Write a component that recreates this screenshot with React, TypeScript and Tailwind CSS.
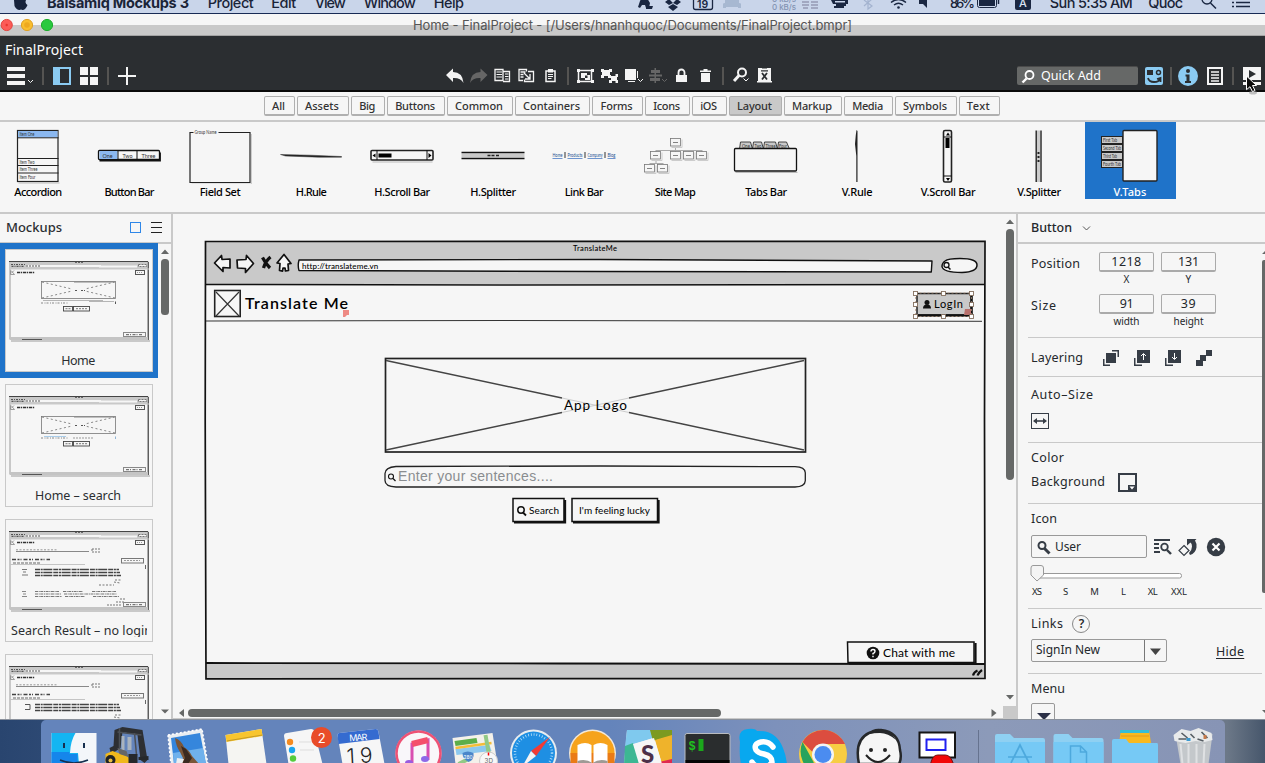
import { useLayoutEffect, useRef, type ReactNode } from "react";

/* Single line of text whose tracking is adjusted so that it spans `w` pixels. */
function Fit({ w, className = "", children }: { w: number; className?: string; children: string }) {
  const ref = useRef<HTMLSpanElement>(null);
  useLayoutEffect(() => {
    const el = ref.current;
    if (!el) return;
    el.style.letterSpacing = "0px";
    const natural = el.getBoundingClientRect().width;
    el.style.letterSpacing = `${(w - natural) / Math.max(1, children.length - 1)}px`;
  }, [w, children]);
  return (
    <span ref={ref} className={`inline-block shrink-0 whitespace-pre ${className}`}>
      {children}
    </span>
  );
}

/* Drawing whose user units start at x, y. */
function Art({ x = 0, y = 0, w, h, className = "", children }: { x?: number; y?: number; w: number; h: number; className?: string; children: ReactNode }) {
  return (
    <svg width={w} height={h} viewBox={`${x} ${y} ${w} ${h}`} className={`block shrink-0 ${className}`} fill="none">
      {children}
    </svg>
  );
}

const ui = "font-['Noto_Sans','Open_Sans',sans-serif]";
const mac = "font-['Inter','Liberation_Sans',sans-serif]";
const hand = "font-['Lato','Open_Sans',sans-serif]";

function MenuBar() {
  return (
    <div className={`relative flex h-[14px] shrink-0 items-start overflow-hidden border-b border-[#172a55] bg-[#c9d5ea] text-[14.5px] font-medium leading-[14px] text-[#1a2438] ${mac}`}>
      <Art x={0} w={47} h={13}>
        <path d="M14 0h12q-1.500 3 1.500 5q-2 5-5 5q-1.500-1-3 0q-3 0-5-4z" fill="#17233c" />
      </Art>
      <div className="-mt-[4px] flex">
        <Fit w={142} className="font-bold">Balsamiq Mockups 3</Fit>
        <Fit w={46} className="ml-[19px]">Project</Fit>
        <Fit w={25} className="ml-[18px]">Edit</Fit>
        <Fit w={31} className="ml-[19px]">View</Fit>
        <Fit w={52} className="ml-[19px]">Window</Fit>
        <Fit w={30} className="ml-[19px]">Help</Fit>
      </div>
      <div className="absolute inset-y-0 left-[630px] flex">
        <Art x={630} w={320} h={13}>
          <path d="M640 1q2-4 7-3l3 5-1 5h-3l-1-3h-3l-2 3-2-1z M646 6h7l-1 3h-6z" fill="#1a2742" />
          <path d="M665 2l4-3 4 4-4 2zM673 3l4-4 4 3-4 3zM668 7l5-3 5 3-5 4z" fill="#1a2742" />
          <rect x="693.500" y="-4" width="19" height="13.500" rx="2" stroke="#1a2742" strokeWidth="1.300" />
          <text x="697" y="7.500" fontSize="10.500" fontWeight="600" fill="#1a2742" fontFamily="Inter">19</text>
          <path d="M723 4q0-1 2-1v-3h14v3q2 0 2 1v4h-3v-1h-12v1h-3z" fill="#9fb0cb" opacity=".8" />
          <text x="772" y="9.500" fontSize="8" fill="#8293b2" fontFamily="Inter" textLength="24">0 kB/s</text>
          <text x="772" y="1.500" fontSize="8" fill="#8293b2" fontFamily="Inter" textLength="24">0 kB/s</text>
          <path d="M802 2h7M802 5h7M803 8h5M811 2h7M811 5h7M811 8h7" stroke="#9599b4" strokeWidth="1.500" />
          <path d="M831 0h17v4h-15zM836 4h10v2h-10zM834 6h10v2h-10z" fill="#1a2742" /><path d="M835 1h10v1.500h-10z" fill="#c9d5ea" />
          <path d="M864 0l8 6-4 3v-10M864 6l8-7" stroke="#a3b3cf" strokeWidth="1.200" />
          <path d="M891 2.500q7.500-6 15 0M894 5q4.500-3.500 9 0" stroke="#1a2742" strokeWidth="1.400" />
          <circle cx="898.500" cy="7.500" r="1.300" fill="#1a2742" />
          <path d="M919 0h3l5-4v12l-4-4h-4z" fill="#1a2742" />
        </Art>
        <Fit w={25} className="-mt-[4px] text-[13px]">86%</Fit>
        <Art x={975} w={77} h={13}>
          <rect x="979.500" y="-4" width="19" height="11.500" rx="2" stroke="#1a2742" />
          <rect x="981" y="-3" width="16" height="9" fill="#1a2742" />
          <path d="M1000.500 0v4" stroke="#1a2742" strokeWidth="1.500" />
          <rect x="1017" y="-5" width="16" height="15" rx="2" fill="#1a2742" />
          <text x="1021" y="7" fontSize="11" fill="#d9e3f2" fontFamily="Inter">A</text>
        </Art>
        <Fit w={83} className="-mt-[4px]">Sun 5:35 AM</Fit>
        <Fit w={35} className="-mt-[4px] ml-[16px]">Quoc</Fit>
        <Art x={1183} w={82} h={13}>
          <circle cx="1207" cy="-1" r="5" stroke="#1a2742" strokeWidth="1.300" />
          <path d="M1210.500 3l5.500 5.500" stroke="#1a2742" strokeWidth="1.500" />
          <path d="M1232 2.500h2M1236 2.500h14M1232 6.500h2M1236 6.500h14" stroke="#1a2742" strokeWidth="1.500" />
        </Art>
      </div>
    </div>
  );
}

function TitleBar() {
  return (
    <div className="flex h-[22px] shrink-0 items-center border-b border-[#a3a3a3] bg-[linear-gradient(#f6f6f6_52%,#c9c9c9_52%)]">
      <Art x={0} y={14} w={413} h={21}>
        <circle cx="6.700" cy="25" r="5.600" fill="#fc5b57" stroke="#e2463f" />
        <circle cx="27" cy="25" r="5.600" fill="#f9be2e" stroke="#dfa023" />
        <circle cx="47" cy="25" r="5.600" fill="#29c93f" stroke="#1dac2b" />
        <circle cx="27" cy="25" r="2.800" fill="#eea91f" />
        <circle cx="6.700" cy="25" r="1.200" fill="#e8352d" />
      </Art>
      <Fit w={439} className={`pt-[2px] text-[13px] text-[#555] ${mac}`}>Home - FinalProject - [/Users/hnanhquoc/Documents/FinalProject.bmpr]</Fit>
    </div>
  );
}

const W = "#f4f4f4";

function ToolIcon({ children }: { children: ReactNode }) {
  return <Art w={24} h={28}>{children}</Art>;
}

function Sep({ w }: { w: number }) {
  return (
    <div className="flex h-[28px] shrink-0 items-center justify-center" style={{ width: w }}>
      <div className="h-[18px] w-[2px] bg-[#555452]" />
    </div>
  );
}

function Toolbar() {
  return (
    <div className="relative flex h-[56px] shrink-0 flex-col border-b-2 border-[#0a0a0a] bg-[#2b2e31]">
      <div className="flex h-[26px] items-center pl-[5px] pt-[1px]">
        <Fit w={78} className={`text-[14px] leading-[20px] text-white ${ui}`}>FinalProject</Fit>
      </div>
      <div className="flex h-[28px]">
        <div className="flex w-[443px]">
          <Art x={0} y={62} w={140} h={28}>
            <path d="M7 67h18v4H7zM7 74h18v4H7zM7 81h18v4H7z" fill={W} />
            <path d="M28 80l2.500 2.500 2.500-2.500" stroke={W} />
            <path d="M42 67h2v18h-2zM107 67h2v18h-2z" fill="#555452" />
            <path d="M53 67h18v18H53z" fill="#8bcbf2" />
            <path d="M60 69h9v14h-9z" fill="#2b2e31" />
            <path d="M80 67h8v8h-8zM90 67h8v8h-8zM80 77h8v8h-8zM90 77h8v8h-8z" fill={W} />
            <path d="M118 75h18v2h-18zM126 67h2v18h-2z" fill={W} />
          </Art>
        </div>
        <div className="flex w-[574px]">
          <ToolIcon><path d="M3 13L10 6.500v3.500q9.500 0 10.500 11q-3-5.500-10.500-5v4z" fill={W} /></ToolIcon>
          <ToolIcon><path d="M20.500 13l-7-6.500v3.500q-9.500 0-10.500 11q3-5.500 10.500-5v4z" fill="#666" /></ToolIcon>
          <ToolIcon>
            <path d="M4 7.500h8v11H4zM12 9.500h6.500v10h-6.500" stroke={W} strokeWidth="1.300" />
            <path d="M5.500 10h5.500M5.500 12.500h5.500M5.500 15h5.500M14 12h3.500M14 14.500h3.500M14 17h3.500" stroke={W} />
          </ToolIcon>
          <ToolIcon>
            <path d="M11.500 9.500v-2H4v11h4M13 9.500h5.500v10h-9v-2" stroke={W} strokeWidth="1.300" />
            <path d="M5.500 10h5M5.500 12.500h3M5.500 15h3M9 11l5.500 5.500M15 12v5h-5" stroke={W} strokeWidth="1.300" />
          </ToolIcon>
          <ToolIcon>
            <path d="M7 9h9v10.500h-9z" stroke={W} strokeWidth="1.500" />
            <path d="M9 7h5v3.500h-5z" fill={W} />
            <path d="M9 12.500h5M9 14.500h5M9 16.500h3.500" stroke={W} />
          </ToolIcon>
          <Sep w={10} />
          <ToolIcon>
            <path d="M5.500 8.500h13v11h-13z" stroke={W} strokeWidth="1.500" />
            <path d="M4 7h3v3H4zM18 7h3v3h-3zM4 18h3v3H4zM18 18h3v3h-3z" fill={W} />
            <path d="M8 11h6v2h3v5h-5v-2H8z" fill={W} />
            <path d="M12 13.500h2.500v2.500h-2.500z" fill="#2b2e31" />
          </ToolIcon>
          <ToolIcon>
            <path d="M5 8h8v6H5zM14 14h6v5h-6z" fill={W} />
            <path d="M4 7h3v3H4zM12 7h3v3h-3zM4 13h3v3H4zM11 13h3v3h-3zM18.500 12h2.500v3h-2.500zM18.500 18h2.500v3h-2.500zM12 18h3v3h-3z" fill={W} />
          </ToolIcon>
          <ToolIcon>
            <path d="M4 7h11v11H4z" fill={W} />
            <path d="M7 19.500h7M16.500 9v7" stroke={W} />
            <path d="M17 17l2.500 2.500L22 17" stroke={W} />
          </ToolIcon>
          <ToolIcon>
            <path d="M6 8h9v3H6zM5 16h10v3H5zM9.500 6h1.500v15h-1.500z" fill="#666" />
            <path d="M4 13.500h13" stroke="#666" strokeWidth="2" />
            <path d="M17 17l2.500 2.500L22 17" stroke="#666" />
          </ToolIcon>
          <ToolIcon>
            <path d="M7 13h11v7H7z" fill={W} />
            <path d="M9.500 14v-3.500a3 3 0 0 1 6 0V14" stroke={W} strokeWidth="1.800" />
          </ToolIcon>
          <ToolIcon>
            <path d="M8 11h9v9H8zM7 8.500h11v1.500H7zM10.500 7h4v2h-4z" fill={W} />
          </ToolIcon>
          <Sep w={12} />
          <ToolIcon>
            <circle cx="13" cy="10.500" r="4" stroke={W} strokeWidth="2" />
            <path d="M10 13.500L5 19" stroke={W} strokeWidth="3" />
            <path d="M14.500 16.500l2.500 2.500 2.500-2.500" stroke={W} />
          </ToolIcon>
          <ToolIcon>
            <path d="M5 6h13v13h1v1.500H4V19h1z" fill={W} />
            <path d="M9 11l5 6.500M14 11l-5 6.500" stroke="#2b2e31" strokeWidth="1.800" />
            <path d="M8 8.800h7M9 6h5" stroke="#2b2e31" strokeWidth="1.200" />
          </ToolIcon>
        </div>
        <div className="mt-[4px] flex h-[19px] w-[121px] items-center rounded-[2px] border-t border-[#4a4a4a] bg-[#666867]">
          <Art x={1017} y={66} w={24} h={19}>
            <circle cx="1029.500" cy="74" r="4" stroke="white" strokeWidth="1.800" />
            <path d="M1026.500 77.500l-4 4" stroke="white" strokeWidth="2.400" />
          </Art>
          <Fit w={60} className={`text-[12.500px] leading-[18px] text-white ${ui}`}>Quick Add</Fit>
        </div>
        <Art x={1138} y={62} w={127} h={28}>
          <rect x="1145" y="67" width="18" height="18" rx="2" fill="#8bcbf2" />
          <path d="M1147 70h6v5h-6z" fill="#2b2e31" />
          <circle cx="1158.500" cy="72.500" r="2" stroke="#2b2e31" strokeWidth="1.500" />
          <path d="M1148 78q1 4 6 4t6-3M1157 79l3.500-1v4" stroke="#2b2e31" strokeWidth="1.800" />
          <path d="M1170 67h2v18h-2zM1232 67h2v18h-2z" fill="#555452" />
          <circle cx="1188" cy="76" r="10" fill="#8bcbf2" />
          <circle cx="1188" cy="71" r="2" fill="#2b2e31" />
          <path d="M1185.500 74.500h4v6.500h1.500v2h-6v-2h1.500v-4.500h-1z" fill="#2b2e31" />
          <rect x="1208" y="68" width="14" height="16" stroke={W} strokeWidth="2" />
          <path d="M1211 72h8M1211 75h8M1211 78h8M1211 81h8" stroke={W} strokeWidth="1.400" />
          <path d="M1243 67h18v13h-18zM1243 82h18v3h-18z" fill={W} />
          <path d="M1249 70l7 4-7 4z" fill="#2b2e31" />
        </Art>
      </div>
      <Art x={1244} y={74} w={18} h={22} className="absolute left-[1244px] top-[38px] z-10">
        <ellipse cx="1253" cy="92.500" rx="4" ry="2" fill="#888" opacity=".5" />
        <path d="M1246.500 76l10 9.500h-4l2.500 5-2.500 1.200-2.500-5-3.500 3z" fill="#0b0b0b" stroke="#fff" />
      </Art>
    </div>
  );
}

function Categories() {
  const tabs: [string, string, number][] = [
    ["All", "w-[31px]", 13], ["Assets", "w-[52px]", 34], ["Big", "w-[34px]", 16], ["Buttons", "w-[58px]", 40],
    ["Common", "w-[66px]", 48], ["Containers", "w-[75px]", 57], ["Forms", "w-[51px]", 32], ["Icons", "w-[45px]", 27],
    ["iOS", "w-[35px]", 17], ["Layout", "w-[53px]", 35], ["Markup", "w-[58px]", 40], ["Media", "w-[49px]", 31],
    ["Symbols", "w-[62px]", 44], ["Text", "w-[41px]", 23],
  ];
  return (
    <div className="flex h-[30px] shrink-0 gap-[2px] border-b-2 border-[#c9c9c9] bg-[#f6f6f6] pl-[264px] pt-[4px]">
      {tabs.map(([name, width, textWidth]) => (
        <div
          key={name}
          className={`flex h-[20px] items-center justify-center rounded-[2px] border border-b-2 border-[#b0b0b0] pr-[2px] text-[11px] font-medium leading-[14px] text-[#333] ${ui} ${width} ${name === "Layout" ? "bg-[#c9c9c9]" : ""}`}
        >
          <Fit w={textWidth}>{name}</Fit>
        </div>
      ))}
    </div>
  );
}

function Tiny({ x, y, w, size = 4.8, children }: { x: number; y: number; w: number; size?: number; children: string }) {
  return (
    <text x={x} y={y} fontFamily="Lato" fontSize={size} fill="#333" textLength={w} lengthAdjust="spacingAndGlyphs">
      {children}
    </text>
  );
}

const library: { name: string; w: number; x?: number; art: ReactNode }[] = [
  { name: "Accordion", w: 48, art: <>
    <rect x="17" y="8.500" width="40.500" height="51" fill="#f6f6f6" stroke="#222" strokeWidth="1.200" />
    <rect x="17.500" y="9" width="39.500" height="6.500" fill="#8bb8f0" />
    <path d="M17 15.800h41M17 36.500h41M17 43.500h41M17 51h41" stroke="#222" />
    <path d="M18 61h41" stroke="#bbb" />
    <Tiny x={19} y={14} w={15}>Item One</Tiny><Tiny x={19} y={41.500} w={15}>Item Two</Tiny>
    <Tiny x={19} y={49} w={18}>Item Three</Tiny><Tiny x={19} y={57} w={16}>Item Four</Tiny>
  </> },
  { name: "Button Bar", w: 50, art: <>
    <rect x="7" y="28.500" width="61" height="9" rx="1" stroke="#111" strokeWidth="1.300" />
    <rect x="8" y="29" width="18" height="8" fill="#8bb8f0" />
    <path d="M26.500 28v10M45.500 28v10" stroke="#111" /><path d="M8 38.500h60.500v-8" stroke="#111" strokeWidth="1.800" />
    <Tiny x={11} y={35.500} w={10} size={6.5}>One</Tiny><Tiny x={31} y={35.500} w={10} size={6.5}>Two</Tiny><Tiny x={50} y={35.500} w={14} size={6.5}>Three</Tiny>
  </> },
  { name: "Field Set", w: 41, art: <>
    <path d="M11 10.500h-3.500v50h60v-50H36" stroke="#222" strokeWidth="1.200" /><path d="M9 62h60V12" stroke="#ccc" />
    <Tiny x={12} y={12} w={22}>Group Name</Tiny>
  </> },
  { name: "H.Rule", w: 31, art: <path d="M7 32.500l30 .7 31 1.300v.7H45L12 34z" fill="#222" stroke="#333" strokeWidth=".5" /> },
  { name: "H.Scroll Bar", w: 56, art: <>
    <rect x="6.500" y="28.500" width="62" height="9.500" rx="1" stroke="#222" strokeWidth="1.600" /><path d="M12.500 28v10M62.500 28v10" stroke="#111" />
    <rect x="14" y="31.500" width="13" height="4" fill="#000" /><path d="M8 33.500l3-2v4zM67 33.500l-3-2.500v5z" fill="#000" /><path d="M8 40h60" stroke="#bbb" />
  </> },
  { name: "H.Splitter", w: 46, art: <>
    <path d="M6 33.500h63" stroke="#c9c9c9" strokeWidth="4" /><path d="M6 30.500h63M6 36.500h63" stroke="#111" strokeWidth="1.700" />
    <path d="M32 33.500h3M36 33.500h3M40.500 33.500h3" stroke="#222" strokeWidth="1.700" />
  </> },
  { name: "Link Bar", w: 39, art: <>
    <g fontFamily="Lato" fontSize="5" fill="#234f91">
      <text x="6" y="35" textLength="10" lengthAdjust="spacingAndGlyphs">Home</text>
      <text x="21" y="35" textLength="15" lengthAdjust="spacingAndGlyphs">Products</text>
      <text x="41" y="35" textLength="15" lengthAdjust="spacingAndGlyphs">Company</text>
      <text x="61" y="35" textLength="8" lengthAdjust="spacingAndGlyphs">Blog</text>
    </g>
    <path d="M6 36.500h10M21 36.500h15M41 36.500h15M61 36.500h8" stroke="#6d94cf" /><path d="M18.500 30v6M38.500 30v6M58.500 30v6" stroke="#333" />
  </> },
  { name: "Site Map", w: 41, art: <>
    <path d="M38 25v3M18.500 28.500h46M18.500 28v2M38 28v2M51.500 28v2M64.500 28v2M18.500 38v4M12 41.500h14" stroke="#aaa" />
    {[[33, 16.5], [13, 29.5], [33, 29.5], [46, 29.5], [59, 29.5], [7, 42.500], [20, 42.500]].map(([a, b]) => (
      <g key={`${a}-${b}`}><path d={`M${a + 1} ${b + 9}h10.500v-8`} stroke="#ccc" /><rect x={a} y={b} width="10" height="7.500" fill="#f6f6f6" stroke="#777" strokeWidth=".8" /><path d={`M${a + 2.5} ${b + 4}h5`} stroke="#666" strokeWidth=".8" /></g>
    ))}
  </> },
  { name: "Tabs Bar", w: 42, art: <>
    <path d="M11 27l1-7h10l2 7 1-7h8l2 7 1-7h11l2 7 1-7h8l3 7z" fill="#c9c9c9" stroke="#333" strokeWidth=".9" />
    <rect x="6" y="26.500" width="62" height="22.500" rx="1" stroke="#111" strokeWidth="1.300" fill="#f6f6f6" /><path d="M7 50.500h62" stroke="#bbb" />
    <Tiny x={13.5} y={25.5} w={8}>One</Tiny><Tiny x={26} y={25.5} w={7}>Two</Tiny><Tiny x={37} y={25.5} w={10}>Three</Tiny><Tiny x={50.5} y={25.5} w={8}>Four</Tiny>
  </> },
  { name: "V.Rule", w: 31, art: <path d="M37 8l1 1v51h-1.200V34l-1.300-12 .8-9z" fill="#222" /> },
  { name: "V.Scroll Bar", w: 55, art: <>
    <rect x="33" y="8.500" width="8" height="51.500" rx="1.500" stroke="#222" strokeWidth="1.600" /><path d="M33 15h8M33 54h8" stroke="#111" />
    <rect x="35" y="16" width="4" height="10" fill="#000" /><path d="M35.500 13.500h4l-2-3zM35.500 56h4l-2 3z" fill="#000" />
  </> },
  { name: "V.Splitter", w: 44, art: <>
    <path d="M37 8.500v51.500" stroke="#ccc" strokeWidth="3" /><path d="M34.700 8.500v51.500M39.500 8.500v51.500" stroke="#222" strokeWidth="1.400" />
    <path d="M37 30v2M37 34v2M37 38v2" stroke="#222" strokeWidth="2" />
  </> },
  { name: "V.Tabs", w: 33, x: 8, art: <>
    <rect x="38" y="8.500" width="34" height="50.500" rx="1" fill="#f6f6f6" stroke="#222" strokeWidth="1.400" />
    {["First Tab", "Second Tab", "Third Tab", "Fourth Tab"].map((t, i) => (
      <g key={t}><rect x="16.500" y={14.5 + i * 8} width="21" height="7" fill="#c9c9c9" stroke="#222" /><Tiny x={18} y={19.8 + i * 8} w={i % 2 ? 18 : 14}>{t}</Tiny></g>
    ))}
  </> },
];

function Library() {
  return (
    <div className="flex h-[92px] shrink-0 items-start overflow-hidden border-b-2 border-[#c9c9c9] bg-[#f6f6f6]">
      <div className="-ml-[7px] flex">
        {library.map((item) => (
          <div key={item.name} className={`flex h-[77px] w-[91px] flex-col items-center pr-px ${item.name === "V.Tabs" ? "bg-[#1f73c9] text-white" : "text-black"}`}>
            <Art x={item.x ?? 0.5} w={75} h={62}>{item.art}</Art>
            <Fit w={item.w} className={`text-[11px] font-medium leading-[16px] ${ui}`}>{item.name}</Fit>
          </div>
        ))}
      </div>
    </div>
  );
}

function BrowserThumb({ children }: { children: ReactNode }) {
  return (
    <Art w={141} h={81}>
      <rect x="1" y="1" width="138" height="77" fill="#f6f6f6" stroke="#999" />
      <path d="M1 1h138v7H1z" fill="#c9c9c9" />
      <path d="M0 .5h139" stroke="#444" /><path d="M139.300 1v78" stroke="#444" />
      <path d="M1 76h138v3H1z" fill="#c4c4c4" /><path d="M2 80h139" stroke="#c9c9c9" strokeWidth="2" />
      <path d="M13 78.500h20" stroke="#555" />
      <path d="M66 1.500h8" stroke="#666" strokeDasharray="2 1" />
      <path d="M17 5h75M90 5.500h38" stroke="#f6f6f6" strokeWidth="2" />
      <path d="M2 3.500h14M2.500 5.300h13" stroke="#555" strokeDasharray="2 1 1 1" strokeWidth="1.200" /><path d="M17 5h14" stroke="#555" strokeDasharray="2 1" />
      <path d="M129.500 3.500h8v2h-8z" fill="#f6f6f6" stroke="#777" strokeDasharray="2 1" />
      <path d="M1 8h139" stroke="#c9c9c9" />
      <path d="M1.500 9.500v4h4M2 9.500l3.500 4M5 9.500l-3 3" stroke="#888" strokeWidth=".8" />
      <path d="M8 11.500h18" stroke="#333" strokeWidth="1.600" strokeDasharray="3 .7 1.500 .8" />
      <rect x="126.500" y="9.500" width="9" height="4" stroke="#555" /><path d="M128 11.500h6" stroke="#999" strokeDasharray="1 1" />
      {children}
      <rect x="114.500" y="71.500" width="22" height="4" fill="#f6f6f6" stroke="#888" /><path d="M117 73.700h16" stroke="#555" strokeDasharray="3 1 1 1.500" />
    </Art>
  );
}

function HomeThumb({ search }: { search?: boolean }) {
  return (
    <BrowserThumb>
      <rect x="32.500" y="20.500" width="74" height="17" stroke="#777" strokeWidth=".8" /><path d="M65 21h40" stroke="#888" />
      <path d="M33 21l30 7M106 21l-30 7M33 37l30-7M106 37l-30-7" stroke="#888" strokeDasharray="2 2.500" />
      <path d="M66 29.500h3M72 29.500h4" stroke="#555" strokeDasharray="2 1" strokeWidth="1.200" />
      {search ? <path d="M35 40.500h22" stroke="#a9cdea" /> : <path d="M34 39.500h60M80 40.500h25" stroke="#b5b5b5" />}
      <path d="M32 42h27" stroke="#888" strokeDasharray="2 1.500 1 1" />
      {search && <path d="M64 42h20" stroke="#999" strokeDasharray="2 1" />}
      <path d="M106.500 40.500v2.500" stroke={search ? "#8fb4d4" : "#555"} />
      <rect x="54.500" y="45.500" width="9" height="4.500" stroke="#444" strokeWidth=".9" /><rect x="64.500" y="45.500" width="16" height="4.500" stroke="#444" strokeWidth=".9" />
      <path d="M56.500 47.700h5M67 47.700h11" stroke="#777" strokeDasharray="2 1" />
    </BrowserThumb>
  );
}

function ResultThumb({ alt }: { alt?: boolean }) {
  return (
    <BrowserThumb>
      <path d="M7 20.500h73" stroke="#888" /><path d="M7 18.800h42" stroke="#999" strokeDasharray="2 1.500" />
      <path d="M83 18h8M83 21h9M83 18v3" stroke="#777" strokeDasharray="2 1" />
      <path d="M3 28.500h38" stroke="#444" strokeWidth="1.400" strokeDasharray="4 1.500 2 1 1 2" />
      <path d="M1 33.500h75" stroke="#c4c4c4" /><path d="M4 32h27" stroke="#666" strokeDasharray="3 1" />
      <rect x="112.500" y="27.500" width="22" height="4.500" stroke="#777" /><path d="M115 29.500h16" stroke="#999" strokeDasharray="2 1" />
      <path d="M136.500 34v4" stroke="#666" />
      <path d="M26 38.500h84M26 41.500h85M26 44.500h86" stroke="#444" strokeWidth="1.300" strokeDasharray="5 .7 2 .6 9 1" />
      {alt
        ? <><path d="M16 38.500h5v5h-5" stroke="#555" /><path d="M31 55.500h96" stroke="#bbb" /></>
        : <path d="M13 38.500h5M14 41h3M13 44h6" stroke="#777" />}
      <path d="M90 54h15M105 51l6 1M106 49h7" stroke="#777" strokeDasharray="2 1.500" />
      <path d="M26 60.500h24M54 60.500h20M83 60.500h24M26 63h26M55 63h53M26 65.500h27M56 65.500h20M84 65.500h26" stroke="#777" strokeWidth="1.200" strokeDasharray="3 .7 1 .6" />
      <path d="M13 60.500h4M14 63h3M13 65.500h5" stroke="#888" />
      <path d="M98 74h15M107 71h8M111 68h5" stroke="#777" strokeDasharray="2 1" />
    </BrowserThumb>
  );
}

function MockupCard({ name, w, selected, children }: { name: string; w: number; selected?: boolean; children: ReactNode }) {
  return (
    <div className={`h-[135px] w-[158px] shrink-0 px-[5px] py-[6px] ${selected ? "bg-[#1f73c9]" : ""}`}>
      <div className="flex h-[123px] w-[148px] flex-col items-center overflow-hidden border border-[#c9c9c9] bg-[#f6f6f6] pt-[11px]">
        {children}
        <div className={`mt-[5px] h-[20px] overflow-hidden pr-[2px] ${w > 136 ? "w-[136px]" : ""}`}>
          <Fit w={w} className={`block text-[12.500px] leading-[20px] text-[#2b2e31] ${ui}`}>{name}</Fit>
        </div>
      </div>
    </div>
  );
}

function Sidebar() {
  return (
    <div className="flex w-[173px] shrink-0 flex-col border-r-2 border-[#c9c9c9]">
      <div className="flex h-[30px] shrink-0 items-center border-b-2 border-[#c9c9c9] pl-[6px]">
        <Fit w={56} className={`-mt-[3px] text-[13px] font-medium leading-[18px] text-[#2b2e31] ${ui}`}>Mockups</Fit>
        <Art x={62} y={214} w={109} h={28}>
          <rect x="130.500" y="222.500" width="10" height="10" stroke="#2f87e8" />
          <path d="M151 222.500h11M151 227.500h11M151 232.500h11" stroke="#222" />
        </Art>
      </div>
      <div className="flex min-h-0 flex-1">
        <div className="-mt-px flex w-[158px] flex-col overflow-hidden">
          <MockupCard name="Home" w={34} selected><HomeThumb /></MockupCard>
          <MockupCard name="Home – search" w={86}><HomeThumb search /></MockupCard>
          <MockupCard name="Search Result – no login" w={141}><ResultThumb /></MockupCard>
          <MockupCard name="" w={37}><ResultThumb alt /></MockupCard>
        </div>
        <Art x={158} y={244} w={13} h={475}>
          <path d="M161 254h8l-4-4.500zM161 709.500h8l-4 4z" fill="#666867" />
          <rect x="161" y="259" width="8" height="56" rx="3.500" fill="#666867" />
        </Art>
      </div>
    </div>
  );
}

function Canvas() {
  const text = `absolute leading-[16px] text-black ${hand}`;
  return (
    <div className="relative h-[505px] w-[843px] shrink-0 overflow-hidden bg-[#f6f6f6]">
      <Art x={173} y={214} w={843} h={505}>
        <rect x="205" y="241" width="779" height="43" fill="#c9c9c9" />
        <path d="M206 664h779v14H206z" fill="#c9c9c9" />
        <path d="M205.500 241.500L985 241.300 984.500 420 985 678.500 206 678.800 205.200 420z" stroke="#111" strokeWidth="1.700" />
        <path d="M206 284.500L500 285 985 284.500" stroke="#111" strokeWidth="1.500" />
        <path d="M206 321L500 320.500 982 321.300" stroke="#333" />
        <path d="M206 663L560 663.500 985 664" stroke="#111" strokeWidth="1.800" />
        <g fill="#f6f6f6" stroke="#111" strokeWidth="1.700" strokeLinejoin="round">
          <path d="M214.500 263l7-7.500.5 4 8-.5v9l-7-.5v4z" />
          <path d="M253.500 263.500l-7-8-.5 4-9 .5.500 8 8 .5v4z" />
          <path d="M277 263l7-8.500 7 9-3 .5.500 6.500-3 .5-.5-3-2 .2-.5 3-3-.7.500-7z" />
          <path d="M299 260L600 259.500 932 261l-.7 11L600 271.500l-301-1q-1.500-5 0-10.500z" strokeWidth="1.400" />
          <path d="M945 261q3-2.500 15-2.500 17 0 17 6.500 0 7-15 7.500-19 0-20-6 0-3.500 3-5.500z" strokeWidth="1.500" />
        </g>
        <path d="M262.500 257.500q3 6 7.500 10.500M270.500 257q-5 4-7 11" stroke="#111" strokeWidth="3.200" />
        <circle cx="946.500" cy="265" r="2.500" stroke="#111" strokeWidth="1.300" /><path d="M948 267l2.500 2.500" stroke="#111" strokeWidth="1.500" />
        <rect x="214.700" y="290.500" width="25.500" height="26" stroke="#222" strokeWidth="1.600" />
        <path d="M216 292l23 24M239 292l-23 24" stroke="#333" strokeWidth="1.200" />
        <path d="M343 310h6v5h-2l-2 2h-2z" fill="#ee8a84" />

        <path d="M917 293.500h54.500V315H917z" fill="#c9c9c9" stroke="#222" strokeWidth="1.500" />
        <path d="M918 315.500h53.500V294" stroke="#111" strokeWidth="2.500" />
        <circle cx="927" cy="302.500" r="2.500" fill="#111" /><path d="M923 308.500q0-4 4-4t4 4z" fill="#111" />
        <path d="M965 309h6v6h-7z" fill="#b8706c" />
        <path d="M915.500 293h56M915.500 316.500h56M915.500 293v23M971.500 293v23" stroke="#b99880" strokeDasharray="2 2" strokeWidth=".7" />
        <g fill="#fff" stroke="#85705f" strokeWidth=".9">
          {[[913.500, 291.500], [941.500, 291.500], [969.500, 291.500], [913.500, 302.500], [969.500, 302.500], [913.500, 314.500], [941.500, 314.500], [969.500, 314.500]].map(([a, b]) => (
            <rect key={`${a},${b}`} x={a} y={b} width="4" height="4" />
          ))}
        </g>

        <rect x="385.500" y="358.500" width="420" height="93.500" stroke="#222" strokeWidth="1.700" />
        <path d="M386 360.500L562 398M386 450L562 412.500M804 360.500L629 398M804 450L629 412.500" stroke="#444" strokeWidth="1.400" />
        <path d="M562 398l67 14.500M562 412.500l67-14.500" stroke="#ccc" strokeWidth="1" />
        <path d="M396 466.500L600 466l195 .7q10 .3 10.300 6v8q-.3 6-10.300 6.300H396q-11-.5-11-6.500v-7q0-6 11-7z" stroke="#222" strokeWidth="1.300" />
        <circle cx="391" cy="476.500" r="2.500" stroke="#111" strokeWidth="1.100" /><path d="M393 478.500l2.500 2.500" stroke="#111" strokeWidth="1.300" />

        <path d="M513 498.500h51V521.500H513z" fill="#f6f6f6" stroke="#111" strokeWidth="1.500" /><path d="M514 522.300h51V500" stroke="#111" strokeWidth="2.300" />
        <path d="M572 498.500h85.500V521.500H572z" fill="#f6f6f6" stroke="#111" strokeWidth="1.500" /><path d="M573 522.300h85.500V500" stroke="#111" strokeWidth="2.300" />
        <circle cx="521" cy="510" r="3.200" stroke="#111" strokeWidth="1.500" /><path d="M523 512.500l3 3" stroke="#111" strokeWidth="1.800" />

        <path d="M847.500 642H974v20.500H848z" fill="#f6f6f6" stroke="#111" strokeWidth="1.500" /><path d="M849 663.300h126.500V643" stroke="#111" strokeWidth="2.200" />
        <circle cx="873" cy="653" r="6.300" fill="#111" />
        <path d="M871 651.500q0-2 2-2t2 1.700-2 2.300v1M873 655.700v1.600" stroke="#fff" strokeWidth="1.400" />
        <path d="M973 675.500q1-3.500 4.500-5M977.500 675.500q1-3 4.500-5.500" stroke="#111" strokeWidth="2.200" />

        <path d="M1006 224h8l-4-4.500zM1006 695h8l-4 4.500zM184 709l-5 4 5 4zM991.500 709l5 4-5 4z" fill="#666867" />
        <rect x="1006" y="229" width="8" height="251" rx="4" fill="#666867" />
        <rect x="188" y="709" width="533" height="8" rx="4" fill="#666867" />
        <path d="M1003 706h13v13h-13zM173 718h843v1H173z" fill="#c9c9c9" />
      </Art>
      <Fit w={44} className={`left-[400px] top-[27px] text-[7.500px] font-medium ${text}`}>TranslateMe</Fit>
      <Fit w={76} className={`left-[129px] top-[44px] text-[8px] font-medium ${text}`}>http://translateme.vn</Fit>
      <Fit w={103} className={`left-[72px] top-[81px] text-[16px] font-semibold ${text}`}>Translate Me</Fit>
      <Fit w={29} className={`left-[761px] top-[82px] text-[11px] ${text}`}>LogIn</Fit>
      <Fit w={63} className={`left-[391px] top-[183px] text-[13.500px] ${text}`}>App Logo</Fit>
      <Fit w={155} className="absolute left-[225px] top-[254px] font-['Liberation_Sans',sans-serif] text-[14px] leading-[16px] text-[#8a8d90]">Enter your sentences....</Fit>
      <Fit w={30} className={`left-[356px] top-[288px] text-[10px] ${text}`}>Search</Fit>
      <Fit w={71} className={`left-[406px] top-[288px] text-[10px] ${text}`}>I'm feeling lucky</Fit>
      <Fit w={72} className={`left-[710px] top-[431px] text-[12px] ${text}`}>Chat with me</Fit>
    </div>
  );
}

function Field({ value, w, label, lw }: { value: string; w: number; label: string; lw: number }) {
  return (
    <div className="flex w-[55px] flex-col items-center">
      <div className="flex h-[20px] w-full items-center justify-center rounded-[2px] border border-[#aaa] border-b-2">
        <Fit w={w} className="text-[12.500px] leading-[14px]">{value}</Fit>
      </div>
      <Fit w={lw} className="mt-[1px] text-[10px] leading-[13px]">{label}</Fit>
    </div>
  );
}

function Inspector() {
  const line = "border-b border-[#c9c9c9]";
  const label = "block text-[12.5px] leading-[16px]";
  return (
    <div className={`flex w-[249px] shrink-0 flex-col overflow-hidden border-l-2 border-[#c9c9c9] text-[#24282c] ${ui}`}>
      <div className="flex h-[30px] shrink-0 items-center border-b-2 border-[#c9c9c9] pl-[13px]">
        <Fit w={41} className="text-[12.500px] font-medium leading-[16px]">Button</Fit>
        <Art w={10} h={8} className="ml-[10px]"><path d="M1 2.500l3.500 3.500 3.500-3.500" stroke="#555" /></Art>
      </div>
      <div className="flex min-h-0 flex-1">
        <div className="flex w-[244px] shrink-0 flex-col overflow-hidden pl-[10px]">
          <div className={`flex h-[94px] shrink-0 flex-col gap-[8px] pl-[3px] pt-[8px] ${line}`}>
            <div className="flex h-[34px]">
              <div className="flex w-[68px] items-start pt-[4px]"><Fit w={49} className={label}>Position</Fit></div>
              <Field value="1218" w={30} label="X" lw={6} />
              <div className="w-[7px]" />
              <Field value="131" w={21} label="Y" lw={6} />
            </div>
            <div className="flex h-[34px]">
              <div className="flex w-[68px] items-start pt-[4px]"><Fit w={25} className={label}>Size</Fit></div>
              <Field value="91" w={14} label="width" lw={26} />
              <div className="w-[7px]" />
              <Field value="39" w={15} label="height" lw={30} />
            </div>
          </div>
          <div className={`flex h-[39px] shrink-0 items-center pl-[3px] ${line}`}>
            <div className="flex w-[72px] pt-[2px]"><Fit w={52} className={label}>Layering</Fit></div>
            <Art x={1103} y={347} w={112} h={20}>
              <g fill="#363d46">
                <path d="M1106 353h10v10h-10zM1112 350h7v7h-1.500v-5.500h-5.500zM1103 359h1.500v5.500h5.500v1.500h-7z" />
                <path d="M1137 350h13v13h-13zM1134 358h1.500v6.500h6.500v1.500h-8z" />
                <path d="M1168 350h13v13h-13zM1165 358h1.500v6.500h6.500v1.500h-8z" />
                <path d="M1206 350h6v6h-6zM1200 355h6v6h-6zM1196 360h7v6h-7z" />
              </g>
              <path d="M1143.500 360v-6M1141 356l2.500-2.500 2.500 2.500M1174.500 353v6M1172 357l2.500 2.500 2.500-2.500" stroke="#fff" />
            </Art>
          </div>
          <div className={`flex h-[66px] shrink-0 flex-col pl-[3px] pt-[10px] ${line}`}>
            <Fit w={62} className={`self-start ${label}`}>Auto–Size</Fit>
            <Art w={18} h={16} className="mt-[10px]">
              <rect x=".500" y=".500" width="17" height="15" stroke="#363d46" />
              <path d="M4 8h10" stroke="#363d46" strokeWidth="1.600" /><path d="M2 8l4-3v6zM16 8l-4-3v6z" fill="#363d46" />
            </Art>
          </div>
          <div className={`flex h-[61px] shrink-0 flex-col pl-[3px] pt-[7px] ${line}`}>
            <Fit w={33} className={`self-start ${label}`}>Color</Fit>
            <div className="mt-[6px] flex h-[20px] items-center gap-[13px]">
              <Fit w={74} className={label}>Background</Fit>
              <Art w={19} h={19}>
                <rect x="1" y="1" width="17" height="17" stroke="#363d46" strokeWidth="2" />
                <path d="M10 12h8v6h-8z" fill="#363d46" /><path d="M11.500 13.500h5l-2.500 3z" fill="#fff" />
              </Art>
            </div>
          </div>
          <div className={`flex h-[105px] shrink-0 flex-col pl-[3px] pt-[7px] ${line}`}>
            <Fit w={26} className={`self-start ${label}`}>Icon</Fit>
            <div className="mt-[8px] flex h-[23px]">
              <div className="flex w-[116px] items-center rounded-[2px] border border-[#999]">
                <Art w={23} h={21}>
                  <circle cx="10" cy="9.500" r="3.500" stroke="#363d46" strokeWidth="2" /><path d="M12.500 12.500l5 5" stroke="#363d46" strokeWidth="3" />
                </Art>
                <Fit w={26} className="text-[12px] leading-[16px]">User</Fit>
              </div>
              <Art x={1147} y={535} w={80} h={23}>
                <path d="M1154 540h16M1154 544h5M1154 548h5M1154 552h6" stroke="#363d46" strokeWidth="1.800" />
                <circle cx="1164.500" cy="547" r="3.300" stroke="#363d46" strokeWidth="1.800" /><path d="M1167 550l4 4" stroke="#363d46" strokeWidth="2.400" />
                <path d="M1184 545.500l5 5-5 5-5-5z" stroke="#363d46" strokeWidth="1.200" />
                <path d="M1187 539h9.500l-1.500 1.500q2 3 1.500 7-1 6-6.500 7.500l-1-2q3-3 3-6.500 0-3-1.500-4l-3.500 3z" fill="#363d46" />
                <circle cx="1216" cy="547" r="9.200" fill="#363d46" /><path d="M1212.500 543.500l7 7M1219.500 543.500l-7 7" stroke="#fff" strokeWidth="2.200" />
              </Art>
            </div>
            <Art x={1030} y={562} w={156} h={22} className="-ml-px mt-[4px]">
              <rect x="1036.500" y="573.500" width="145" height="4.500" rx="2" stroke="#999" fill="#fff" />
              <path d="M1033 565.500h8q2.500 0 2.500 2.500v7l-6.500 6-6-6v-7q0-2.500 2-2.500z" fill="#f4f4f4" stroke="#999" />
            </Art>
            <div className="-ml-[9px] mt-px flex text-[9.500px] leading-[14px]">
              <div className="w-[29px] text-center"><Fit w={10}>XS</Fit></div>
              <div className="w-[29px] text-center">S</div>
              <div className="w-[29px] text-center">M</div>
              <div className="w-[29px] text-center">L</div>
              <div className="w-[29px] text-center"><Fit w={10}>XL</Fit></div>
              <div className="w-[24px] text-center"><Fit w={16}>XXL</Fit></div>
            </div>
          </div>
          <div className={`flex h-[65px] shrink-0 flex-col pl-[3px] pt-[5px] ${line}`}>
            <div className="flex h-[20px] items-center gap-[9px]">
              <Fit w={32} className={label}>Links</Fit>
              <div className="flex size-[18px] items-center justify-center rounded-full border border-[#888] text-[12px] font-semibold leading-none">?</div>
            </div>
            <div className="mt-[4px] flex h-[24px] items-center">
              <div className="flex h-[23px] w-[136px] items-center rounded-[2px] border border-[#999]">
                <div className="flex h-full w-[113px] items-center border-r border-[#777] pl-[4px]">
                  <Fit w={64} className="-mt-px text-[12px] leading-[16px]">SignIn New</Fit>
                </div>
                <Art w={20} h={21}><path d="M5 8.500h11l-5.500 6.500z" fill="#444" /></Art>
              </div>
              <Fit w={28} className="ml-[49px] mt-[3px] text-[12.500px] leading-[16px] underline underline-offset-2">Hide</Fit>
            </div>
          </div>
          <div className="flex shrink-0 flex-col pl-[3px] pt-[7px]">
            <Fit w={34} className={`self-start ${label}`}>Menu</Fit>
            <div className="mt-[6px] h-[24px] w-[24px] rounded-[2px] border border-[#999]">
              <Art w={22} h={22}><path d="M5 9h14l-7 7z" fill="#2c3147" /></Art>
            </div>
          </div>
        </div>
        <Art x={1262} y={244} w={3} h={475}>
          <path d="M1262 254l3-3v3zM1262 710h3v3z" fill="#666867" />
          <rect x="1262" y="260" width="8" height="333" rx="2" fill="#666867" />
        </Art>
      </div>
    </div>
  );
}

const dockIcons: ReactNode[] = [
  <>
    <path d="M51.500 733h45v31h-45z" fill="#f3f6fa" /><path d="M51.500 733h24q-5 8-5.500 20h8l1 11h-27.500z" fill="#13b5f2" /><path d="M51.500 752h18v2h8v10h-26z" fill="#1777e8" opacity=".75" />
    <path d="M64 743v5M84 743v5" stroke="#17304f" strokeWidth="2" /><path d="M60 760q14 6 28 0" stroke="#17304f" strokeWidth="1.500" />
  </>,
  <>
    <path d="M114 730l8-3 20 3 5 30-3 3-4-3-3-25-15-3-2 16-6 4-4 0-1-4 4-2z" fill="#2d2f33" />
    <path d="M121 736h3v14h-3zM127 737h4v13h-4z" fill="#aab3be" /><path d="M117 732l24 3M119 728v20M134 733l2 22" stroke="#4b4f55" strokeWidth="1.500" />
    <path d="M105 754l7-3 14 5 8 6v2h-29z" fill="#f0b81c" /><circle cx="110" cy="760" r="5" fill="#202225" /><circle cx="110" cy="760.500" r="2" fill="#e7be43" /><path d="M128 754h9v10h-9zM138 757l10-1v4h-10z" fill="#26282b" />
    <path d="M117 748l9 3 2 6-9-3z" fill="#666" />
  </>,
  <>
    <path d="M168 735l34-6 6 36h-37z" fill="#e9eef2" stroke="#fff" strokeWidth="1.500" strokeDasharray="2 2" /><path d="M171 738l29-5 6 31h-32z" fill="#3586dc" /><path d="M173 753l30-5 3 16h-32z" fill="#6fb1ec" />
    <path d="M175 738q6 2 9 9 5 3 8 9l7 8h-18l2-6-3-6q-4-6-5-14z" fill="#7a5638" /><path d="M181 746l5 3 6 9-4 6h-6l3-6z" fill="#3b2a20" /><path d="M177 758l7 1-2 5h-6z" fill="#e9edf0" />
  </>,
  <>
    <path d="M225 735l36-6 5 35h-38z" fill="#f5f5f2" /><path d="M225 735l36-6 1 7-36 6z" fill="#f8c52e" /><path d="M226 741l36-6" stroke="#c59b25" />
  </>,
  <>
    <path d="M284 736q0-3 3-3l24-4q3 0 3.500 3l8 32h-34z" fill="#f6f6f6" />
    <circle cx="290" cy="742" r="3.200" fill="#f58a1f" /><circle cx="292" cy="750" r="3.200" fill="#1aa4ee" /><circle cx="293" cy="758.500" r="3.200" fill="#55cc3c" />
    <path d="M299 742h12M300 750h14" stroke="#ddd" /><circle cx="321.500" cy="737.500" r="10.500" fill="#e94c29" />
    <text x="317.700" y="742.500" fontFamily="Inter" fontSize="13" fill="#fff">2</text>
  </>,
  <>
    <path d="M337 735q0-2 2-2l36-4q2.500 0 3 3l6 32h-42z" fill="#f6f6f6" /><path d="M337 735q0-2 2-2l36-4q2.500 0 3 3l1 7-41 5z" fill="#356bd0" />
    <text x="349" y="740.500" fontFamily="Inter" fontSize="9" fill="#fff" transform="rotate(-4 360 740)" textLength="18">MAR</text>
    <text x="346" y="763" fontFamily="Inter" fontSize="21" fontWeight="300" fill="#222" transform="rotate(-3 360 755)" textLength="26">19</text>
  </>,
  <>
    <circle cx="418.500" cy="753.500" r="23" fill="#fff" /><circle cx="418.500" cy="753.500" r="22" stroke="#ee5275" strokeWidth="2.500" fill="#f9f7fa" />
    <path d="M412 763v-19l16-4v20" stroke="#d94fb0" strokeWidth="3" /><path d="M412 744l16-4" stroke="#f4506c" strokeWidth="6" /><ellipse cx="409" cy="763" rx="4" ry="3" fill="#9a5ce0" /><ellipse cx="425" cy="759" rx="4" ry="3" fill="#8d69e8" />
  </>,
  <>
    <path d="M452 738l40-5 5 31h-42z" fill="#f4f1ea" /><path d="M454 741l22-3 1 5-22 3z" fill="#5cae49" /><path d="M455 749l34-4 2 6-35 4z" fill="#8dc8ee" /><path d="M455 748l36-5" stroke="#f4bd39" strokeWidth="2.500" />
    <path d="M485 735l5 28M458 764l12-6" stroke="#92c986" strokeWidth="4" /><path d="M462 753q5-3 11 0 1 7-5 9-6-3-6-9z" fill="#4a86c9" /><text x="463" y="759" fontFamily="Inter" fontSize="5" fill="#fff" textLength="9" lengthAdjust="spacingAndGlyphs">280</text>
    <circle cx="488" cy="761" r="9" fill="#f8f8f8" stroke="#ccc" /><path d="M488 752.500v3" stroke="red" strokeWidth="1.500" /><text x="484" y="763" fontFamily="Inter" fontSize="6.500" fill="#666" textLength="8.500" lengthAdjust="spacingAndGlyphs">3D</text>
  </>,
  <>
    <circle cx="533.500" cy="753" r="23.500" fill="#e9edf0" /><circle cx="533.500" cy="753" r="21.500" fill="#1e8fe3" /><circle cx="533.500" cy="753" r="18.500" stroke="#b8e0fa" strokeWidth="2.500" strokeDasharray=".8 2" />
    <path d="M550 737l-19 14 5 5z" fill="#f23b35" /><path d="M531 751l5 5-14 11z" fill="#f3f3f3" />
  </>,
  <>
    <circle cx="592" cy="753" r="23.500" fill="#f3e8d8" /><circle cx="592" cy="753" r="22" fill="#f6a31c" /><path d="M570 753h44v11h-44z" fill="#ea7b16" />
    <path d="M577 745q8-4 14 0v19h-14zM593 745q7-4 14 0v19h-14z" fill="#fff" /><path d="M577 761q8-3 15 2 7-5 15-2v5h-30z" fill="#9f9a95" />
  </>,
  <>
    <path d="M627 730h45v34h-48z" fill="#f3f3f3" /><path d="M627 730h24l2 8-28 9z" fill="#7fc9ee" /><path d="M650 730h22v6l-19 5z" fill="#7c9a21" /><path d="M655 740l17-5v27l-10 2z" fill="#efb32b" />
    <path d="M625 746l8-3 8 21h-17z" fill="#3db793" /><path d="M659 762l13-3v5h-13z" fill="#e0284f" /><path d="M633 744l21-6 8 26h-23z" fill="#f6f6f6" />
    <text x="641" y="763" fontFamily="Lato" fontWeight="900" fontSize="24" fill="#4d3049">S</text>
  </>,
  <>
    <rect x="684.500" y="733.500" width="45" height="34" rx="2" fill="#2a2d2e" stroke="#b9bcc0" /><path d="M685 760h44v4h-44z" fill="#050505" />
    <text x="688" y="749.500" fontFamily="Liberation Mono" fontSize="12" fontWeight="700" fill="#20c11f">$</text><path d="M698 739h5v12h-5z" fill="#1ba71b" />
  </>,
  <>
    <path d="M740 742q-3-12 8-13 7-1 9 2 19-1 26 17 3 7 4 16h-46q-2-8-1-22z" fill="#08a8ef" />
    <path d="M773 747q-5-6.500-12-5-8 2-5 8 2 3 8 4 8 2 8 8-3 6-12 5-6-1-8-5" stroke="#fff" strokeWidth="5.500" strokeLinecap="round" />
  </>,
  <>
    <circle cx="822.500" cy="754" r="24" fill="#f7cd43" /><path d="M802 742a24 24 0 0 1 42.500 2H822q-8 0-10 8z" fill="#dc4d3f" /><path d="M802 742l11 20 3 12a24 24 0 0 1-14-32z" fill="#28a35d" />
    <circle cx="822.500" cy="754.500" r="11" fill="#f4f4f4" /><circle cx="822.500" cy="754.500" r="8.500" fill="#4b8cf0" />
  </>,
  <>
    <path d="M859 764q-5-24 10-31l12-3q18 2 19 20 2 8-1 14z" fill="#f6f6f6" stroke="#26282a" strokeWidth="2.500" /><path d="M866 734q8-6 14-5l-2-1 13 5 5 7q-8-7-16-7-7 0-14 1z" fill="#26282a" />
    <circle cx="871" cy="750" r="2" fill="#222" /><circle cx="885" cy="750" r="2" fill="#222" /><path d="M866 755q12 14 24 0" stroke="#222" strokeWidth="2" />
  </>,
  <>
    <rect x="919" y="732.500" width="35.500" height="25" fill="#fff" stroke="#151515" strokeWidth="2" /><rect x="926" y="739.500" width="19" height="10.500" stroke="#2020f0" strokeWidth="2" /><path d="M930 764q2-9 7-9h8q5 0 8 9z" fill="#f20808" stroke="#6d1414" />
  </>,
];

const folder = (x: number) => (
  <><path d={`M${x} 763v-27q0-2 2-2h13l4 4h29q2 0 2 2v23z`} fill="#8fd0f2" /><path d={`M${x} 763v-21h50v21z`} fill="#76c9f5" /></>
);

const dockPlaces: ReactNode[] = [
  <>{folder(995)}<path d="M1011 763l9-18 9 18M1008 757h24" stroke="#4da9dd" strokeWidth="1.700" /></>,
  <>{folder(1053)}<path d="M1070 764v-18h10l6 6v12M1080 746v6h6" stroke="#4da9dd" strokeWidth="1.500" /></>,
  <><path d="M1119 743l2-13h28l2 13z" fill="#f8b920" /><path d="M1120 730h29v3h-29z" fill="#36bdd6" /><path d="M1121 736h28" stroke="#e29a18" /><path d="M1112 763v-22q0-2 2-2h12l3 4h28q1 0 1 2v18z" fill="#76c9f5" /></>,
  <>
    <path d="M1175 734h37l-4 30h-28z" fill="#c4c8cb" /><path d="M1180 744l2 20M1188 744v20M1196 744v20M1204 744l-1 20" stroke="#dfe1e3" strokeWidth="2" />
    <path d="M1173 735l8-6 9 2 8-3 13 5 1 7-8 2-9-1-10 2-11-2z" fill="#e8eaeb" /><path d="M1181 733l6 5M1190 734l4 4M1201 732l6 6M1178 739h8M1197 739l6 2" stroke="#565d63" strokeWidth="1.600" /><path d="M1186 738h4v3h-4z" fill="#3c9ad0" /><path d="M1203 735h3v4h-3z" fill="#c57a4b" />
  </>,
];

function Dock() {
  return (
    <div className="h-[44px] shrink-0 overflow-hidden border-t border-[#8a919c] bg-[linear-gradient(90deg,#29456f,#4a6796_30%,#6d7686_85%,#6c7888_97%,#46566b)] pl-[41px]">
      <div className="flex h-[50px] w-[1184px] rounded-[5px] bg-[linear-gradient(90deg,#6484bb_0%,#6484bb_48%,#7d91bb_62%,#8c9ab9_80%,#8794b5_100%)] pl-[4px]">
        {dockIcons.map((icon, i) => (
          <Art key={i} x={45 + i * 57.5} y={720} w={57.5} h={43} className="overflow-visible">{icon}</Art>
        ))}
        <Art x={965} y={720} w={26} h={43}><path d="M978.500 730v33" stroke="#66738f" /></Art>
        {dockPlaces.map((icon, i) => (
          <Art key={i} x={991 + i * 57.5} y={720} w={57.5} h={43} className="overflow-visible">{icon}</Art>
        ))}
      </div>
    </div>
  );
}

export default function App() {
  return (
    <div className="flex h-[763px] w-[1265px] flex-col overflow-hidden bg-[#f6f6f6]">
      <MenuBar />
      <TitleBar />
      <Toolbar />
      <Categories />
      <Library />
      <div className="flex h-[505px] shrink-0">
        <Sidebar />
        <Canvas />
        <Inspector />
      </div>
      <Dock />
    </div>
  );
}
